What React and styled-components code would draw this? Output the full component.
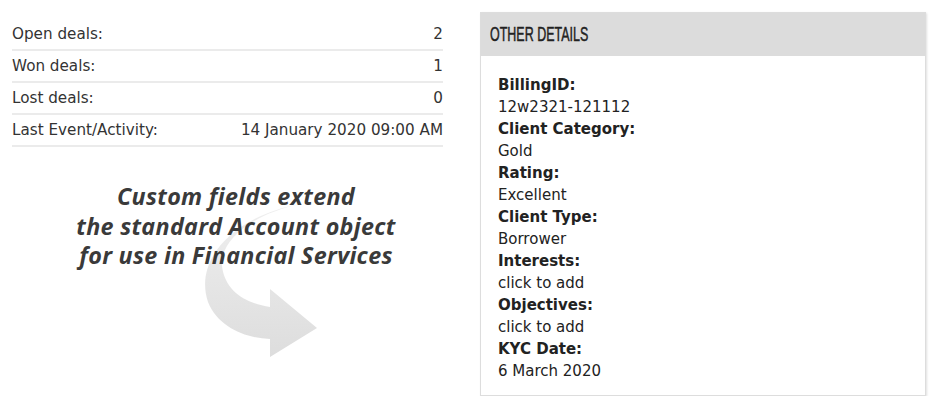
import styled, { createGlobalStyle } from "styled-components";

const GlobalStyle = createGlobalStyle`
  body {
    margin: 0;
    background: #ffffff;
    font-family: "DejaVu Sans", sans-serif;
  }
`;

const deals = [
  { label: "Open deals:", value: "2" },
  { label: "Won deals:", value: "1" },
  { label: "Lost deals:", value: "0" },
  { label: "Last Event/Activity:", value: "14 January 2020 09:00 AM" },
];

const details = [
  { label: "BillingID:", value: "12w2321-121112" },
  { label: "Client Category:", value: "Gold" },
  { label: "Rating:", value: "Excellent" },
  { label: "Client Type:", value: "Borrower" },
  { label: "Interests:", value: "click to add" },
  { label: "Objectives:", value: "click to add" },
  { label: "KYC Date:", value: "6 March 2020" },
];

export default function App() {
  return (
    <>
      <GlobalStyle />
      <Page>
        <LeftColumn>
          <DealTable>
            {deals.map((d) => (
              <DealRow key={d.label}>
                <span>{d.label}</span>
                <span>{d.value}</span>
              </DealRow>
            ))}
          </DealTable>
          <Callout>
            <Arrow viewBox="0 0 431 240" aria-hidden="true">
              <defs>
                <linearGradient id="arrowFade" x1="0" y1="0" x2="0" y2="1">
                  <stop offset="0" stopColor="#efefef" />
                  <stop offset="1" stopColor="#dddddd" />
                </linearGradient>
              </defs>
              <path
                d="M288 57 C226 68 181 110 196 155 C206 180 233 191 258 192 L258 210 L305 181 L258 142 L258 160 C233 156 213 144 210 119 C208 94 238 68 288 57 Z"
                fill="url(#arrowFade)"
              />
            </Arrow>
            <CalloutText>
              Custom fields extend
              <br />
              the standard Account object
              <br />
              for use in Financial Services
            </CalloutText>
          </Callout>
        </LeftColumn>
        <Panel>
          <PanelHeader>
            <HeaderTitle>OTHER DETAILS</HeaderTitle>
          </PanelHeader>
          <PanelBody>
            {details.map((d) => (
              <Field key={d.label}>
                <FieldLabel>{d.label}</FieldLabel>
                <FieldValue>{d.value}</FieldValue>
              </Field>
            ))}
          </PanelBody>
        </Panel>
      </Page>
    </>
  );
}

const Page = styled.div`
  display: flex;
  align-items: flex-start;
  gap: 37px;
  padding: 12px 6px 0 12px;
  width: 932px;
  box-sizing: border-box;
`;

const LeftColumn = styled.div`
  width: 431px;
  display: flex;
  flex-direction: column;
`;

const DealTable = styled.div`
  margin-top: 7px;
  display: flex;
  flex-direction: column;
`;

const DealRow = styled.div`
  display: flex;
  justify-content: space-between;
  align-items: center;
  height: 30px;
  border-bottom: 2px solid #ebebeb;
  font-size: 15.2px;
  color: #333333;
`;

const Callout = styled.div`
  position: relative;
  height: 240px;
`;

const Arrow = styled.svg`
  position: absolute;
  left: 0;
  top: 0;
  width: 431px;
  height: 240px;
`;

const CalloutText = styled.div`
  position: relative;
  padding: 35px 0 0 17px;
  text-align: center;
  font-family: "Open Sans", sans-serif;
  font-style: italic;
  font-weight: 700;
  font-size: 23.3px;
  line-height: 29.5px;
  color: #3a3a3a;
  letter-spacing: 0.3px;
`;

const Panel = styled.div`
  width: 446px;
  height: 384px;
  box-sizing: border-box;
  border: 1px solid #dddddd;
  box-shadow: 1px 1px 2px rgba(0, 0, 0, 0.12);
  display: flex;
  flex-direction: column;
`;

const PanelHeader = styled.div`
  height: 43px;
  background: #dcdcdc;
  display: flex;
  align-items: center;
  padding-left: 9px;
`;

const HeaderTitle = styled.span`
  display: inline-block;
  font-family: "Liberation Sans", sans-serif;
  font-size: 19.5px;
  color: #222222;
  -webkit-text-stroke: 0.45px #222222;
  transform: scaleX(0.64);
  transform-origin: left center;
`;

const PanelBody = styled.div`
  padding: 18px 17px 0;
  display: flex;
  flex-direction: column;
`;

const Field = styled.div`
  display: flex;
  flex-direction: column;
`;

const FieldLabel = styled.div`
  font-weight: 700;
  font-size: 15px;
  line-height: 22px;
  color: #222222;
`;

const FieldValue = styled.div`
  font-size: 15px;
  line-height: 22px;
  color: #222222;
`;
